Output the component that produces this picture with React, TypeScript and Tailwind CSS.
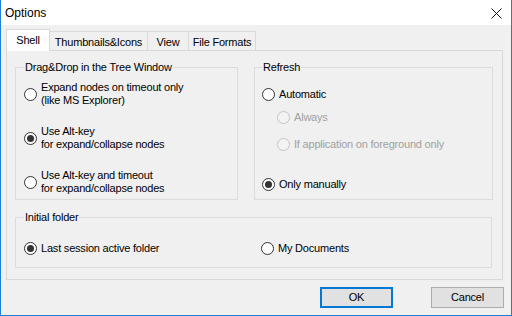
import clsx from "clsx";
import type { ReactNode } from "react";

type RadioProps = {
  checked?: boolean;
  disabled?: boolean;
  children: ReactNode;
};

const Radio = ({ checked, disabled, children }: RadioProps) => {
  return (
    <div className="flex items-center gap-[4px]">
      <span
        className={clsx(
          "w-[13px] h-[13px] rounded-full border flex items-center justify-center shrink-0",
          disabled ? "border-[#c4c4c4] bg-[#f3f3f3]" : "border-[#333333] bg-white"
        )}
      >
        {checked && <span className="w-[7px] h-[7px] rounded-full bg-[#333333]" />}
      </span>
      <span className={clsx("leading-[13px]", disabled ? "text-[#a0a0a0]" : "text-black")}>{children}</span>
    </div>
  );
};

const Tab = ({ label, width }: { label: string; width: string }) => (
  <div className={clsx("h-[19px] -ml-px border border-b-0 border-[#d9d9d9] bg-[#f0f0f0] flex items-center justify-center pt-[2px]", width)}>
    {label}
  </div>
);

export default function App() {
  return (
    <div className="w-[512px] h-[316px] bg-[#f0f0f0] border-x border-b border-[#1e7fd6] flex flex-col text-[11px] tracking-[-0.2px] text-black font-['Liberation_Sans',Arial,sans-serif] overflow-hidden">
      {/* title bar */}
      <header className="h-[25px] bg-white flex items-center justify-between pl-[4px] pr-[9px] shrink-0">
        <p className="text-[12px] tracking-normal">Options</p>
        <svg width="11" height="11" viewBox="0 0 11 11" className="mt-[1px]">
          <path d="M0.5 0.5 L10.5 10.5 M10.5 0.5 L0.5 10.5" stroke="#111" strokeWidth="1" fill="none" />
        </svg>
      </header>

      {/* tabs */}
      <div className="h-[25px] flex items-end pl-[5px] shrink-0">
        <div className="relative z-10 w-[44px] h-[22px] -mb-px border border-b-0 border-[#d9d9d9] bg-white flex items-center justify-center">
          Shell
        </div>
        <Tab label="Thumbnails&Icons" width="w-[99px]" />
        <Tab label="View" width="w-[42px]" />
        <Tab label="File Formats" width="w-[68px]" />
      </div>

      {/* tab page */}
      <main className="ml-[5px] w-[497px] h-[230px] border border-[#d9d9d9] bg-[#f0f0f0] pt-[10px] pl-[8px] shrink-0">
        <div className="flex gap-[16px]">
          <fieldset className="w-[223px] h-[139px] border border-[#dcdcdc]">
            <legend className="ml-[8px] px-[1px] leading-[13px]">Drag&amp;Drop in the Tree Window</legend>
            <div className="flex flex-col gap-[18px] pl-[8px] mt-[7px]">
              <Radio>
                Expand nodes on timeout only
                <br />
                (like MS Explorer)
              </Radio>
              <Radio checked>
                Use Alt-key
                <br />
                for expand/collapse nodes
              </Radio>
              <Radio>
                Use Alt-key and timeout
                <br />
                for expand/collapse nodes
              </Radio>
            </div>
          </fieldset>

          <fieldset className="w-[239px] h-[139px] border border-[#dcdcdc]">
            <legend className="ml-[7px] px-[1px] leading-[13px]">Refresh</legend>
            <div className="flex flex-col pl-[7px] mt-[14px]">
              <Radio>Automatic</Radio>
              <div className="pl-[15px] mt-[10px] flex flex-col gap-[14px]">
                <Radio disabled>Always</Radio>
                <Radio disabled>If application on foreground only</Radio>
              </div>
              <div className="mt-[27px]">
                <Radio checked>Only manually</Radio>
              </div>
            </div>
          </fieldset>
        </div>

        <fieldset className="w-[477px] h-[57px] mt-[11px] border border-[#dcdcdc]">
          <legend className="ml-[8px] px-[1px] leading-[13px]">Initial folder</legend>
          <div className="flex pl-[8px] mt-[18px]">
            <div className="w-[237px]">
              <Radio checked>Last session active folder</Radio>
            </div>
            <Radio>My Documents</Radio>
          </div>
        </fieldset>
      </main>

      {/* buttons */}
      <footer className="flex justify-end gap-[38px] pr-[7px] mt-[7px]">
        <button className="w-[73px] h-[21px] border-2 border-[#0078d7] bg-[#e1e1e1] flex items-center justify-center">
          OK
        </button>
        <button className="w-[73px] h-[21px] border border-[#adadad] bg-[#e1e1e1] flex items-center justify-center">
          Cancel
        </button>
      </footer>
    </div>
  );
}
